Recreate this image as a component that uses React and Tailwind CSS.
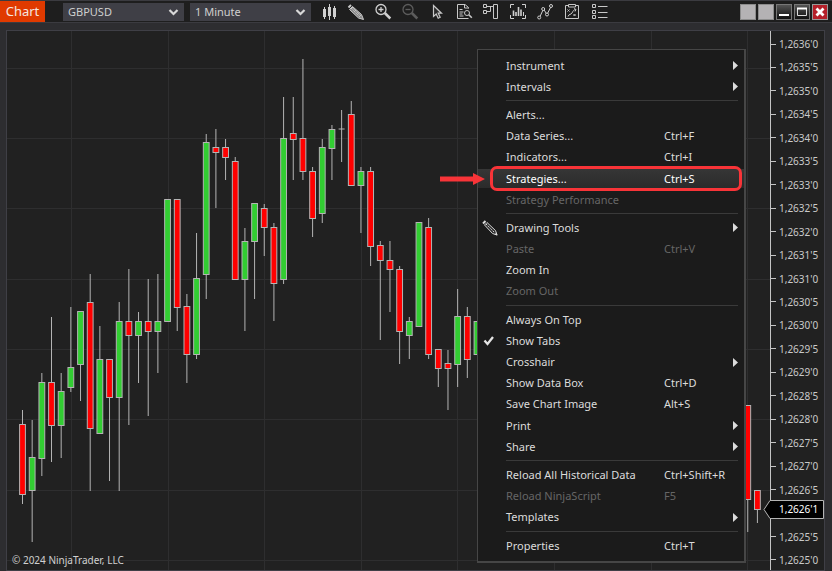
import React from 'react'

const UP = '#32cd32'
const DOWN = '#ff0000'

// [slot, open/close top, open/close bottom, high, low, direction]
const CANDLES = [
  [0, 424, 494, 410, 504, 'down'],
  [1, 457, 490, 420, 542, 'up'],
  [2, 382, 458, 373, 476, 'up'],
  [3, 382, 425, 317, 462, 'down'],
  [4, 391, 425, 373, 458, 'up'],
  [5, 367, 387, 307, 392, 'up'],
  [6, 311, 364, 311, 401, 'up'],
  [7, 302, 428, 274, 491, 'down'],
  [8, 359, 433, 326, 433, 'up'],
  [9, 359, 397, 359, 481, 'down'],
  [10, 321, 397, 302, 491, 'up'],
  [11, 321, 335, 269, 425, 'down'],
  [12, 321, 335, 312, 383, 'up'],
  [13, 321, 331, 279, 416, 'down'],
  [14, 321, 331, 274, 373, 'up'],
  [15, 199, 321, 199, 321, 'up'],
  [16, 199, 307, 199, 331, 'down'],
  [17, 306, 354, 294, 383, 'down'],
  [18, 278, 354, 233, 359, 'up'],
  [19, 142, 274, 134, 299, 'up'],
  [20, 147, 152, 129, 208, 'down'],
  [21, 147, 157, 139, 180, 'down'],
  [22, 161, 279, 157, 279, 'down'],
  [23, 241, 279, 228, 331, 'up'],
  [24, 203, 241, 203, 299, 'up'],
  [25, 208, 227, 204, 256, 'down'],
  [26, 227, 283, 223, 321, 'down'],
  [27, 138, 279, 97, 284, 'up'],
  [28, 133, 139, 97, 180, 'down'],
  [29, 138, 171, 59, 180, 'down'],
  [30, 171, 218, 167, 237, 'down'],
  [31, 147, 213, 139, 223, 'up'],
  [32, 129, 148, 125, 180, 'up'],
  [33, 129, 129, 110, 162, 'flat'],
  [34, 114, 185, 101, 185, 'down'],
  [35, 171, 185, 167, 233, 'up'],
  [36, 171, 246, 167, 266, 'down'],
  [37, 245, 260, 241, 340, 'down'],
  [38, 260, 269, 241, 312, 'down'],
  [39, 269, 331, 266, 364, 'down'],
  [40, 321, 335, 317, 359, 'up'],
  [41, 222, 326, 222, 326, 'up'],
  [42, 227, 354, 218, 359, 'down'],
  [43, 349, 368, 349, 387, 'down'],
  [44, 363, 368, 350, 410, 'down'],
  [45, 316, 364, 289, 387, 'up'],
  [46, 316, 359, 307, 378, 'down'],
  [47, 321, 354, 321, 354, 'up'],
  [75, 405, 499, 405, 532, 'down'],
  [76, 490, 509, 490, 523, 'down'],
]

const GRID_X = [71, 168, 264, 361, 457, 554, 651, 747]
const GRID_Y = [68, 138, 208, 279, 349, 419, 490, 560]

// The empty step is the one covered by the last price marker
const PRICES = [
  "1,2636'0", "1,2635'5", "1,2635'0", "1,2634'5", "1,2634'0", "1,2633'5",
  "1,2633'0", "1,2632'5", "1,2632'0", "1,2631'5", "1,2631'0", "1,2630'5",
  "1,2630'0", "1,2629'5", "1,2629'0", "1,2628'5", "1,2628'0", "1,2627'5",
  "1,2627'0", "1,2626'5", "", "1,2625'5", "1,2625'0",
]

const MENU = [
  [
    { label: 'Instrument', sub: true },
    { label: 'Intervals', sub: true },
  ],
  [
    { label: 'Alerts...' },
    { label: 'Data Series...', keys: 'Ctrl+F' },
    { label: 'Indicators...', keys: 'Ctrl+I' },
    { label: 'Strategies...', keys: 'Ctrl+S', active: true },
    { label: 'Strategy Performance', disabled: true },
  ],
  [
    { label: 'Drawing Tools', sub: true, icon: 'pencil' },
    { label: 'Paste', keys: 'Ctrl+V', disabled: true },
    { label: 'Zoom In' },
    { label: 'Zoom Out', disabled: true },
  ],
  [
    { label: 'Always On Top' },
    { label: 'Show Tabs', icon: 'check' },
    { label: 'Crosshair', sub: true },
    { label: 'Show Data Box', keys: 'Ctrl+D' },
    { label: 'Save Chart Image', keys: 'Alt+S' },
    { label: 'Print', sub: true },
    { label: 'Share', sub: true },
  ],
  [
    { label: 'Reload All Historical Data', keys: 'Ctrl+Shift+R' },
    { label: 'Reload NinjaScript', keys: 'F5', disabled: true },
    { label: 'Templates', sub: true },
  ],
  [{ label: 'Properties', keys: 'Ctrl+T' }],
]

const TOOLS = [
  {
    name: 'Chart style',
    art: (
      <g fill="#d0d0d0">
        <path d="M4 7h3v8H4zM9 5h3v9H9zM14 6h3v9h-3z" />
        <path d="M5.500 5v12M10.500 2v16M15.500 4v13" stroke="#d0d0d0" />
      </g>
    ),
  },
  {
    name: 'Drawing tools',
    art: (
      <g stroke="#c8c8c8" fill="#8a8a8a">
        <path d="M6.500 4.500L15.500 12.500l2 5-5-1.500L3.500 7.500z" />
        <path d="M5 6l9 9M6 5l9 9" strokeDasharray="1.500 .7" />
        <path d="M2.500 5.500l2.500-2.500" strokeWidth="2" />
      </g>
    ),
  },
  {
    name: 'Zoom in',
    art: (
      <g stroke="#d0d0d0" fill="none">
        <circle cx="8" cy="7.500" r="5" strokeWidth="1.300" />
        <path d="M5.500 7.500h5M8 5v5" strokeWidth="1.300" />
        <path d="M11.800 11l5.500 5.500" strokeWidth="2.500" />
      </g>
    ),
  },
  {
    name: 'Zoom out',
    art: (
      <g stroke="#5c5c5c" fill="none">
        <circle cx="8" cy="7.500" r="5" strokeWidth="1.300" />
        <path d="M5.500 7.500h5" strokeWidth="1.300" />
        <path d="M11.800 11l5.500 5.500" strokeWidth="2.500" />
      </g>
    ),
  },
  {
    name: 'Cursor',
    art: (
      <path
        d="M6.500 3.500v11l2.700-2.400 2 4.200 2-1-2-4.100h3.300z"
        stroke="#c8c8c8"
        fill="#2b2b2b"
        strokeWidth="1.200"
      />
    ),
  },
  {
    name: 'Data box',
    art: (
      <g stroke="#c8c8c8" fill="none">
        <path d="M14.500 6.500v-1L11 2.500H3.500v14h11" />
        <path d="M10.500 2.500V6h4M5.500 7.500h3M5.500 10h4M5.500 12h3M5.500 14h4" />
        <circle cx="13" cy="11" r="2.500" />
        <path d="M14.800 12.800l3 3" strokeWidth="1.600" />
      </g>
    ),
  },
  {
    name: 'Chart trader',
    art: (
      <g stroke="#c8c8c8" fill="none">
        <path d="M2.500 2.500h3v3h-3zM2.500 8.500h3v3h-3zM6 4.500h6M6 9.500h3.500v-5" />
        <path d="M12.500 2.500h4v14h-4z" />
      </g>
    ),
  },
  {
    name: 'Snapshot',
    art: (
      <g stroke="#d0d0d0" fill="none">
        <path d="M2.500 6V2.500H6M14 2.500h3.500V6M17.500 13v3.500H14M6 16.500H2.500V13" />
        <path d="M5.500 8.500v5.500M8 10v4M10.500 5v9M13 7.500v6.500" strokeWidth="1.600" />
        <path d="M15.500 10v4" />
      </g>
    ),
  },
  {
    name: 'Indicators',
    art: (
      <g stroke="#d0d0d0" fill="#1e1e1e">
        <path d="M4.500 15.500L8.500 7l3.500 5.500L16 4.500" fill="none" />
        <circle cx="4.200" cy="15.500" r="1.500" />
        <circle cx="8.200" cy="7" r="1.500" />
        <circle cx="12" cy="12.500" r="1.500" />
        <circle cx="16" cy="4" r="1.500" />
      </g>
    ),
  },
  {
    name: 'Strategies',
    art: (
      <g stroke="#c8c8c8" fill="none">
        <path d="M6 3.500H3.500v13h13v-13H14" />
        <path d="M6.500 2.500h7v2.500h-7z" />
        <path d="M5.500 7.500l2 2M7.500 7.500l-2 2M11.500 12l2 2M13.500 12l-2 2M6 14.500c1-3 3-1.500 4-3.500s1.500-3 3.500-3.500M12 6.500l2 1-1 2" />
      </g>
    ),
  },
  {
    name: 'Properties',
    art: (
      <g stroke="#c8c8c8" fill="none">
        <path d="M3.500 2.500h3v3h-3zM3.500 8.500h3v3h-3zM3.500 13.500h3v3h-3z" />
        <path d="M9 4.500h9.500M9 10.500h9.500M9 15.500h9.500" />
      </g>
    ),
  },
]

function Picker({ label, value }) {
  return (
    <div className="relative flex h-[18px] w-[121px] items-center bg-[#3f3f46]">
      <select
        aria-label={label}
        className="h-full w-full appearance-none bg-transparent px-[5px] text-[11px] leading-[16px] text-[#cfcfcf] outline-none"
      >
        <option>{value}</option>
      </select>
      <svg className="pointer-events-none absolute right-[5px] h-[10px] w-[11px]" viewBox="0 0 11 10">
        <path d="M1.500 3l4 4 4-4" fill="none" stroke="#d8d8d8" strokeWidth="2.200" />
      </svg>
    </div>
  )
}

function Toolbar() {
  return (
    <header className="flex h-[23px] items-center border-y border-[#3b3b40] bg-[#1e1e1e]">
      <h1 className="flex h-full w-[45px] items-center justify-center bg-[#e03a00] text-[13px] text-[#f4e6e0]">
        Chart
      </h1>
      <div className="ml-[18px] flex gap-[6px]">
        <Picker label="Instrument" value="GBPUSD" />
        <Picker label="Interval" value="1 Minute" />
      </div>
      <nav className="ml-2 flex gap-[7px]">
        {TOOLS.map((tool) => (
          <button key={tool.name} aria-label={tool.name} className="h-5 w-5">
            <svg className="h-5 w-5" viewBox="0 0 20 20">
              {tool.art}
            </svg>
          </button>
        ))}
      </nav>
      <div className="mr-1 ml-auto flex gap-[2px]">
        <button aria-label="Link instrument" className="h-4 w-4 border border-[#8c8c8c] bg-[#b4b2b4]" />
        <button aria-label="Link interval" className="h-4 w-4 border border-[#8c8c8c] bg-[#b4b2b4]" />
        <button aria-label="Minimize" className="h-4 w-4 border border-[#777] bg-gradient-to-b from-[#555] to-[#111]">
          <svg viewBox="0 0 14 14">
            <path d="M2 10h10" stroke="#fff" strokeWidth="2" />
          </svg>
        </button>
        <button aria-label="Maximize" className="h-4 w-4 border border-[#777] bg-gradient-to-b from-[#555] to-[#111]">
          <svg viewBox="0 0 14 14">
            <path d="M2.500 3.500h9v7h-9z" fill="none" stroke="#ddd" />
            <path d="M2 3.500h10" stroke="#fff" strokeWidth="2" />
          </svg>
        </button>
        <button aria-label="Close" className="h-4 w-4 border border-[#999] bg-[#b5202a]">
          <svg viewBox="0 0 14 14">
            <path d="M3.500 3.500l7 7M10.500 3.500l-7 7" stroke="#fff" strokeWidth="2.800" />
          </svg>
        </button>
      </div>
    </header>
  )
}

function Candle({ data }) {
  const [slot, top, bottom, high, low, dir] = data
  const x = 22.5 + slot * 9.67
  return (
    <g stroke="#b4b4b4">
      <path d={`M${x} ${high}V${low}`} />
      {dir === 'flat' ? (
        <path d={`M${x - 3} ${top}h6`} />
      ) : (
        <rect x={x - 2.9} y={top + 0.5} width="5.800" height={bottom - top} fill={dir === 'up' ? UP : DOWN} />
      )}
    </g>
  )
}

function Plot() {
  return (
    <svg className="absolute inset-0 h-full w-full" viewBox="7 31 763 539" preserveAspectRatio="none">
      <g stroke="#2e2e2f">
        {GRID_X.map((x) => (
          <path key={x} d={`M${x + 0.5} 31V570`} />
        ))}
        {GRID_Y.map((y) => (
          <path key={y} d={`M7 ${y + 0.5}H770`} />
        ))}
      </g>
      {CANDLES.map((c) => (
        <Candle key={c[0]} data={c} />
      ))}
    </svg>
  )
}

function PriceAxis() {
  return (
    <aside className="relative w-[54px] border-l border-[#c4c4c4]">
      <ol className="flex h-full flex-col justify-between pt-[5px] pb-[2px]">
        {PRICES.map((price, i) => (
          <li key={i} className="flex h-4 items-center gap-[3px] text-[10px] leading-4 text-[#cacaca]">
            <span className="h-px w-[5px] bg-[#c4c4c4]" />
            {price}
          </li>
        ))}
      </ol>
      <div className="absolute top-[469px] -left-[8px] h-[19px] w-[61px]">
        <svg className="absolute inset-0 h-full w-full" viewBox="0 0 61 19">
          <path d="M1 9.500L7 .5h53.500v18H7z" fill="#000" stroke="#b4b4b4" />
        </svg>
        <span className="relative block pl-4 text-[10px] leading-[19px] text-white">1,2626'1</span>
      </div>
    </aside>
  )
}

function ItemIcon({ name }) {
  if (name === 'pencil') {
    return (
      <svg className="h-4 w-4" viewBox="0 0 16 16">
        <path d="M1 3.500L3.500 1" stroke="#ddd" strokeWidth="2" />
        <path d="M2.500 5L5 2.500l8.500 8 1.500 4.500-4.500-1.500z" fill="#333" stroke="#d0d0d0" />
        <path d="M4 4l8 8" stroke="#ddd" strokeDasharray="1.500 1" />
        <path d="M12.500 14.500l2-2 1 3z" fill="#ddd" />
      </svg>
    )
  }
  if (name === 'check') {
    return (
      <svg className="h-4 w-4" viewBox="0 0 16 16">
        <path d="M2.500 7.500l3 3.500 5.500-7" fill="none" stroke="#e4e4e4" strokeWidth="2.300" />
      </svg>
    )
  }
  return null
}

// Hover row with the red callout and the arrow pointing at it
function Highlight() {
  return (
    <>
      <div className="absolute inset-x-0 inset-y-px bg-gradient-to-b from-[#363636] to-[#2b2b2b]" />
      <div className="absolute -inset-y-[2px] right-[2px] left-[12px] rounded-[7px] border-3 border-[#f83438]" />
      <svg className="absolute top-[4px] -left-[38px] h-[14px] w-[46px]" viewBox="0 0 46 14">
        <path d="M0 4.500h33V1l12 6-12 6V9.500H0z" fill="#f83438" />
      </svg>
    </>
  )
}

function MenuItem({ item }) {
  const tone = item.active ? 'text-white' : item.disabled ? 'text-[#666]' : 'text-[#dcdcdc]'
  return (
    <li className="relative flex flex-1">
      {item.active && <Highlight />}
      <button
        disabled={item.disabled}
        className={`relative flex flex-1 items-center pr-[6px] text-left text-[11px] leading-4 ${tone}`}
      >
        <span className="w-[28px] pl-[4px]">
          <ItemIcon name={item.icon} />
        </span>
        <span className="flex-1">{item.label}</span>
        <span className="w-[69px]">{item.keys}</span>
        <span className="w-[5px]">
          {item.sub && (
            <svg className="h-[9px] w-[5px]" viewBox="0 0 5 9">
              <path d="M0 0l5 4.500L0 9z" fill="#dcdcdc" />
            </svg>
          )}
        </span>
      </button>
    </li>
  )
}

function ContextMenu() {
  return (
    <menu className="absolute top-[18px] left-[470px] flex h-[514px] w-[269px] flex-col border border-r-2 border-b-2 border-[#464646] bg-[#1b1b1b] py-[5px]">
      {MENU.map((group, i) => (
        <React.Fragment key={i}>
          {i > 0 && (
            <li role="separator" className="flex h-[7px] items-center pr-[6px] pl-[28px]">
              <hr className="flex-1 border-[#3a3a3a]" />
            </li>
          )}
          {group.map((item) => (
            <MenuItem key={item.label} item={item} />
          ))}
        </React.Fragment>
      ))}
    </menu>
  )
}

function App() {
  return (
    <div className="flex h-screen min-h-[571px] flex-col overflow-hidden bg-[#2d2d30] font-['Noto_Sans','Open_Sans',sans-serif]">
      <Toolbar />

      {/* Chart panel */}
      <main className="relative mt-[7px] mr-[7px] ml-[6px] flex flex-1 border border-[#3f3f46] bg-[#212121]">
        <section className="relative flex-1">
          <Plot />
          <p className="absolute bottom-[2px] left-[5px] text-[10px] leading-4 text-[#d0d0d0]">
            © 2024 NinjaTrader, LLC
          </p>
        </section>
        <PriceAxis />
        <ContextMenu />
      </main>
    </div>
  )
}

export default App
